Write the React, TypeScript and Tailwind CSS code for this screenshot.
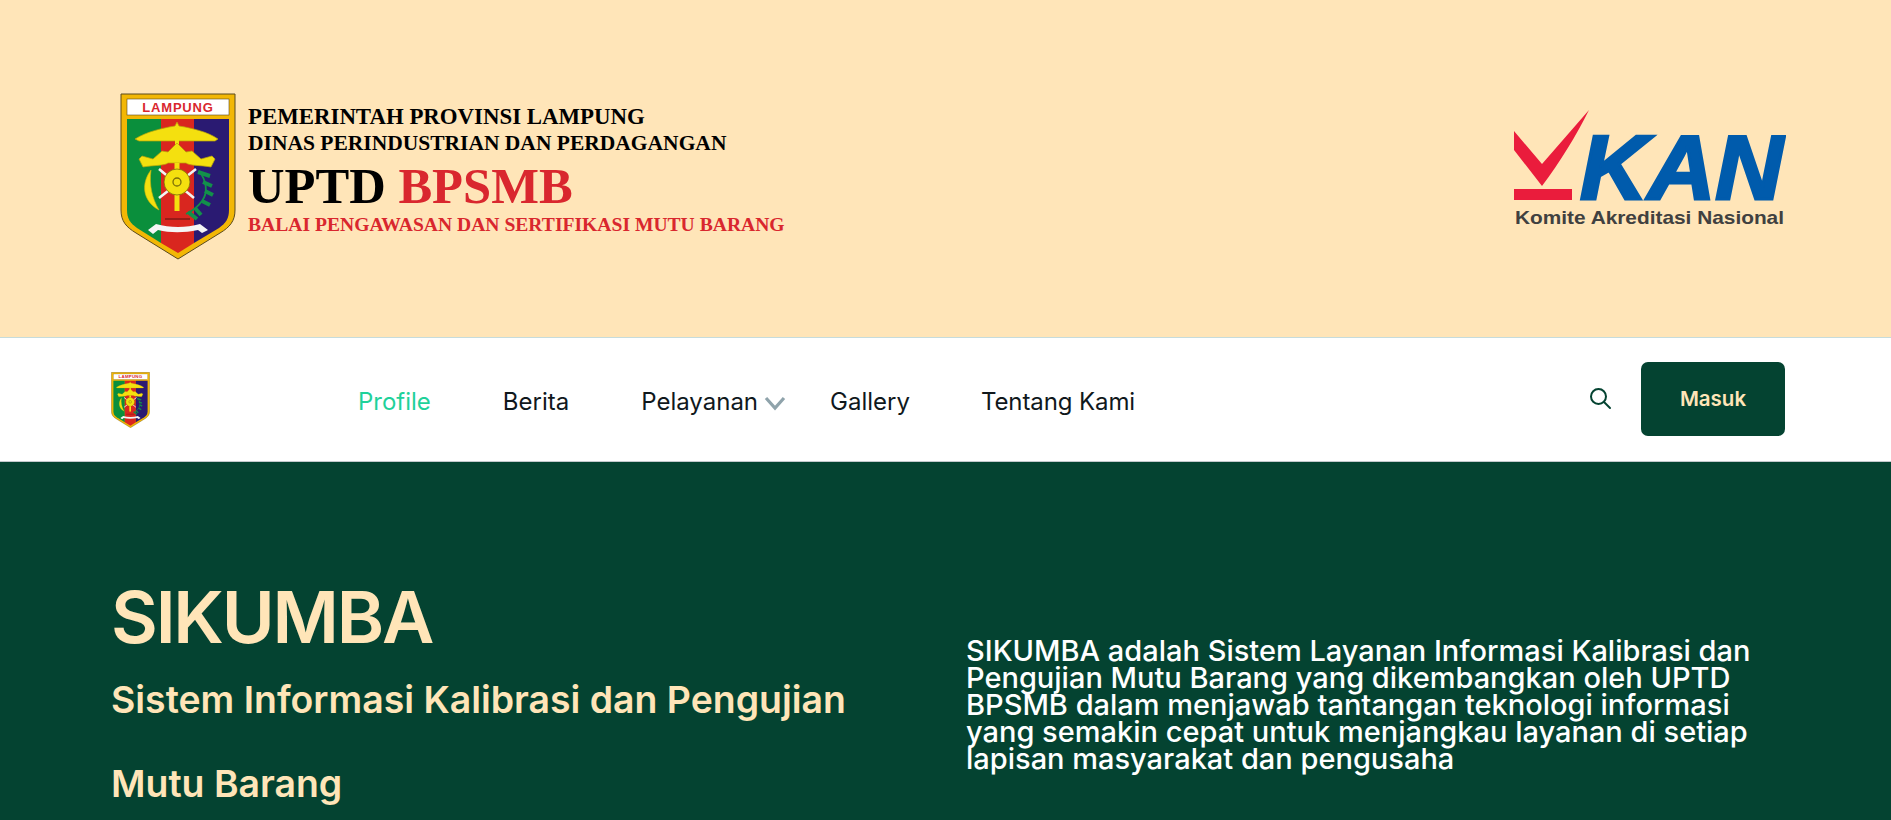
const Crest = ({ className }: { className: string }) => (
  <svg viewBox="0 0 116 167" className={className}>
    <path d="M1 1H115V117C115 128 110 134 100 140L58 166L16 140C6 134 1 128 1 117Z" fill="#f2b705" stroke="#5a4a1e" strokeWidth="1" />
    <rect x="7" y="6" width="102" height="16" fill="#fff" stroke="#5a4a1e" strokeWidth="0.6" />
    <text x="58" y="19" textAnchor="middle" fontFamily="Liberation Sans, sans-serif" fontWeight="700" fontSize="13" letterSpacing="0.8" fill="#d9272e">LAMPUNG</text>
    <path d="M7 26H41V150L17 135C10 130 7 125 7 117Z" fill="#0a8f3c" />
    <path d="M41 26H74V150L58 160L41 150Z" fill="#d9261f" />
    <path d="M74 26H109V117C109 125 106 130 99 135L74 150Z" fill="#2a1a72" />
    {/* payung */}
    <path d="M57 29L59 33C72 35 88 39 98 46L95 48H19L15 46C26 39 42 35 55 33Z" fill="#f4e00f" stroke="#b9a307" strokeWidth="0.7" />
    <rect x="55" y="47" width="4" height="7" fill="#f4e00f" />
    {/* siger */}
    <path d="M19 66L22 63L33 66L42 58L48 59L57 50L66 59L72 58L81 66L92 63L95 66L91 74C80 72 70 73 66 70H48C44 73 34 72 23 74Z" fill="#f4e00f" stroke="#b9a307" strokeWidth="0.7" />
    <rect x="54.5" y="70" width="5" height="48" fill="#f4e00f" />
    <path d="M39 76L74 105M76 76L39 105" stroke="#f2f2f2" strokeWidth="2.6" />
    <circle cx="57" cy="89" r="13" fill="#f4e00f" stroke="#7c6f08" strokeWidth="0.8" />
    <circle cx="57" cy="89" r="4" fill="#f4e00f" stroke="#7c6f08" strokeWidth="1.3" />
    {/* padi */}
    <path d="M31 77C21 90 22 108 39 117C32 105 29 92 31 77Z" fill="#f4e00f" stroke="#c9b30a" strokeWidth="0.6" />
    {/* kapas */}
    <path d="M79 78C87 88 88 100 82 108C78 114 72 118 66 121" stroke="#12904a" strokeWidth="1.8" fill="none" />
    <path d="M78 79L90 83M83 89L92 93M85 98L93 102M82 108L90 112M75 115L81 122M68 119L77 126" stroke="#12904a" strokeWidth="4" fill="none" />
    <path d="M45 126H70" stroke="#5b1010" strokeWidth="1" />
    <path d="M28 137L36 131C50 135 66 135 80 131L88 137L82 140L78 137C64 140 50 140 38 137L33 141Z" fill="#f5f5f5" />
  </svg>
);

const KanLogo = () => (
  <svg viewBox="0 0 272 118" className="w-[272px] h-[118px]">
    <path d="M0 21L28 54L75 0C62 26 46 52 28 76L0 40Z" fill="#ea1c3c" />
    <rect x="0" y="79" width="58" height="11" fill="#ea1c3c" />
    <text x="66" y="89" fontFamily="Liberation Sans, sans-serif" fontWeight="700" fontStyle="italic" fontSize="91" textLength="203" lengthAdjust="spacingAndGlyphs" fill="#005bac" stroke="#005bac" strokeWidth="3">KAN</text>
    <text x="1" y="114" fontFamily="Liberation Sans, sans-serif" fontWeight="700" fontSize="18.5" textLength="269" lengthAdjust="spacingAndGlyphs" fill="#404040">Komite Akreditasi Nasional</text>
  </svg>
);

export default function App() {
  return (
    <div className="h-[820px] overflow-hidden font-['Inter',sans-serif]">
      <header className="h-[337px] bg-[#ffe5b8] flex items-center justify-between pl-[120px] pr-[105px]">
        <div className="flex items-start gap-[12px] mt-[16px]">
          <Crest className="w-[116px] h-[167px]" />
          <div className="font-['Liberation_Serif',serif] font-bold pt-[11px]">
            <p className="text-[22.85px] leading-[26px] text-black whitespace-nowrap">PEMERINTAH PROVINSI LAMPUNG</p>
            <p className="text-[21.5px] leading-[26px] text-black whitespace-nowrap">DINAS PERINDUSTRIAN DAN PERDAGANGAN</p>
            <p className="mt-[2px] text-[50.6px] leading-[56px] text-black whitespace-nowrap">
              UPTD <span className="text-[#d9272e]">BPSMB</span>
            </p>
            <p className="mt-[1px] text-[19.6px] leading-[20px] text-[#d9272e] whitespace-nowrap">BALAI PENGAWASAN DAN SERTIFIKASI MUTU BARANG</p>
          </div>
        </div>
        <KanLogo />
      </header>

      <nav className="h-[125px] bg-white border-t border-b border-t-[#c6dcdc] border-b-[#c3c9cc] flex items-center pl-[111px] pr-[106px]">
        <Crest className="w-[39px] h-[56px]" />
        <ul className="flex items-center ml-[208px] pt-[4px] text-[24px] text-[#10181c]">
          <li className="text-[#1fd19a] mr-[72px]">Profile</li>
          <li className="mr-[72px]">Berita</li>
          <li className="flex items-center mr-[43px]">
            Pelayanan
            <svg viewBox="0 0 24 24" className="w-[24px] h-[24px] ml-[5px]" fill="none" stroke="#8fa3ab" strokeWidth="3.2">
              <path d="M3 8L12 18L21 8" />
            </svg>
          </li>
          <li className="mr-[71px]">Gallery</li>
          <li className="tracking-[-0.1px]">Tentang Kami</li>
        </ul>
        <svg viewBox="0 0 24 24" className="ml-auto mb-[3px] w-[24px] h-[24px]" fill="none" stroke="#044331" strokeWidth="2" strokeLinecap="round">
          <circle cx="10.5" cy="10.5" r="7.5" />
          <path d="M16 16L22 22" />
        </svg>
        <button className="ml-[29px] mb-[1px] w-[144px] h-[74px] rounded-[7px] bg-[#044331] text-[#ffe5b8] text-[20.5px] font-semibold">Masuk</button>
      </nav>

      <section className="bg-[#044331] h-[358px] flex pl-[111px] pr-[100px]">
        <div className="w-[855px] pt-[119px]">
          <h1 className="text-[72px] leading-[72px] font-semibold text-[#ffe5b8] tracking-[-2.2px]">SIKUMBA</h1>
          <h2 className="mt-[5px] w-[760px] text-[37.4px] leading-[84px] font-semibold text-[#ffe5b8]">
            Sistem Informasi Kalibrasi dan Pengujian Mutu Barang
          </h2>
        </div>
        <p className="pt-[175px] text-[29px] leading-[27px] font-medium text-white w-[810px]">
          SIKUMBA adalah Sistem Layanan Informasi Kalibrasi dan Pengujian Mutu Barang yang dikembangkan oleh UPTD BPSMB dalam menjawab tantangan teknologi informasi yang semakin cepat untuk menjangkau layanan di setiap lapisan masyarakat dan pengusaha
        </p>
      </section>
    </div>
  );
}
